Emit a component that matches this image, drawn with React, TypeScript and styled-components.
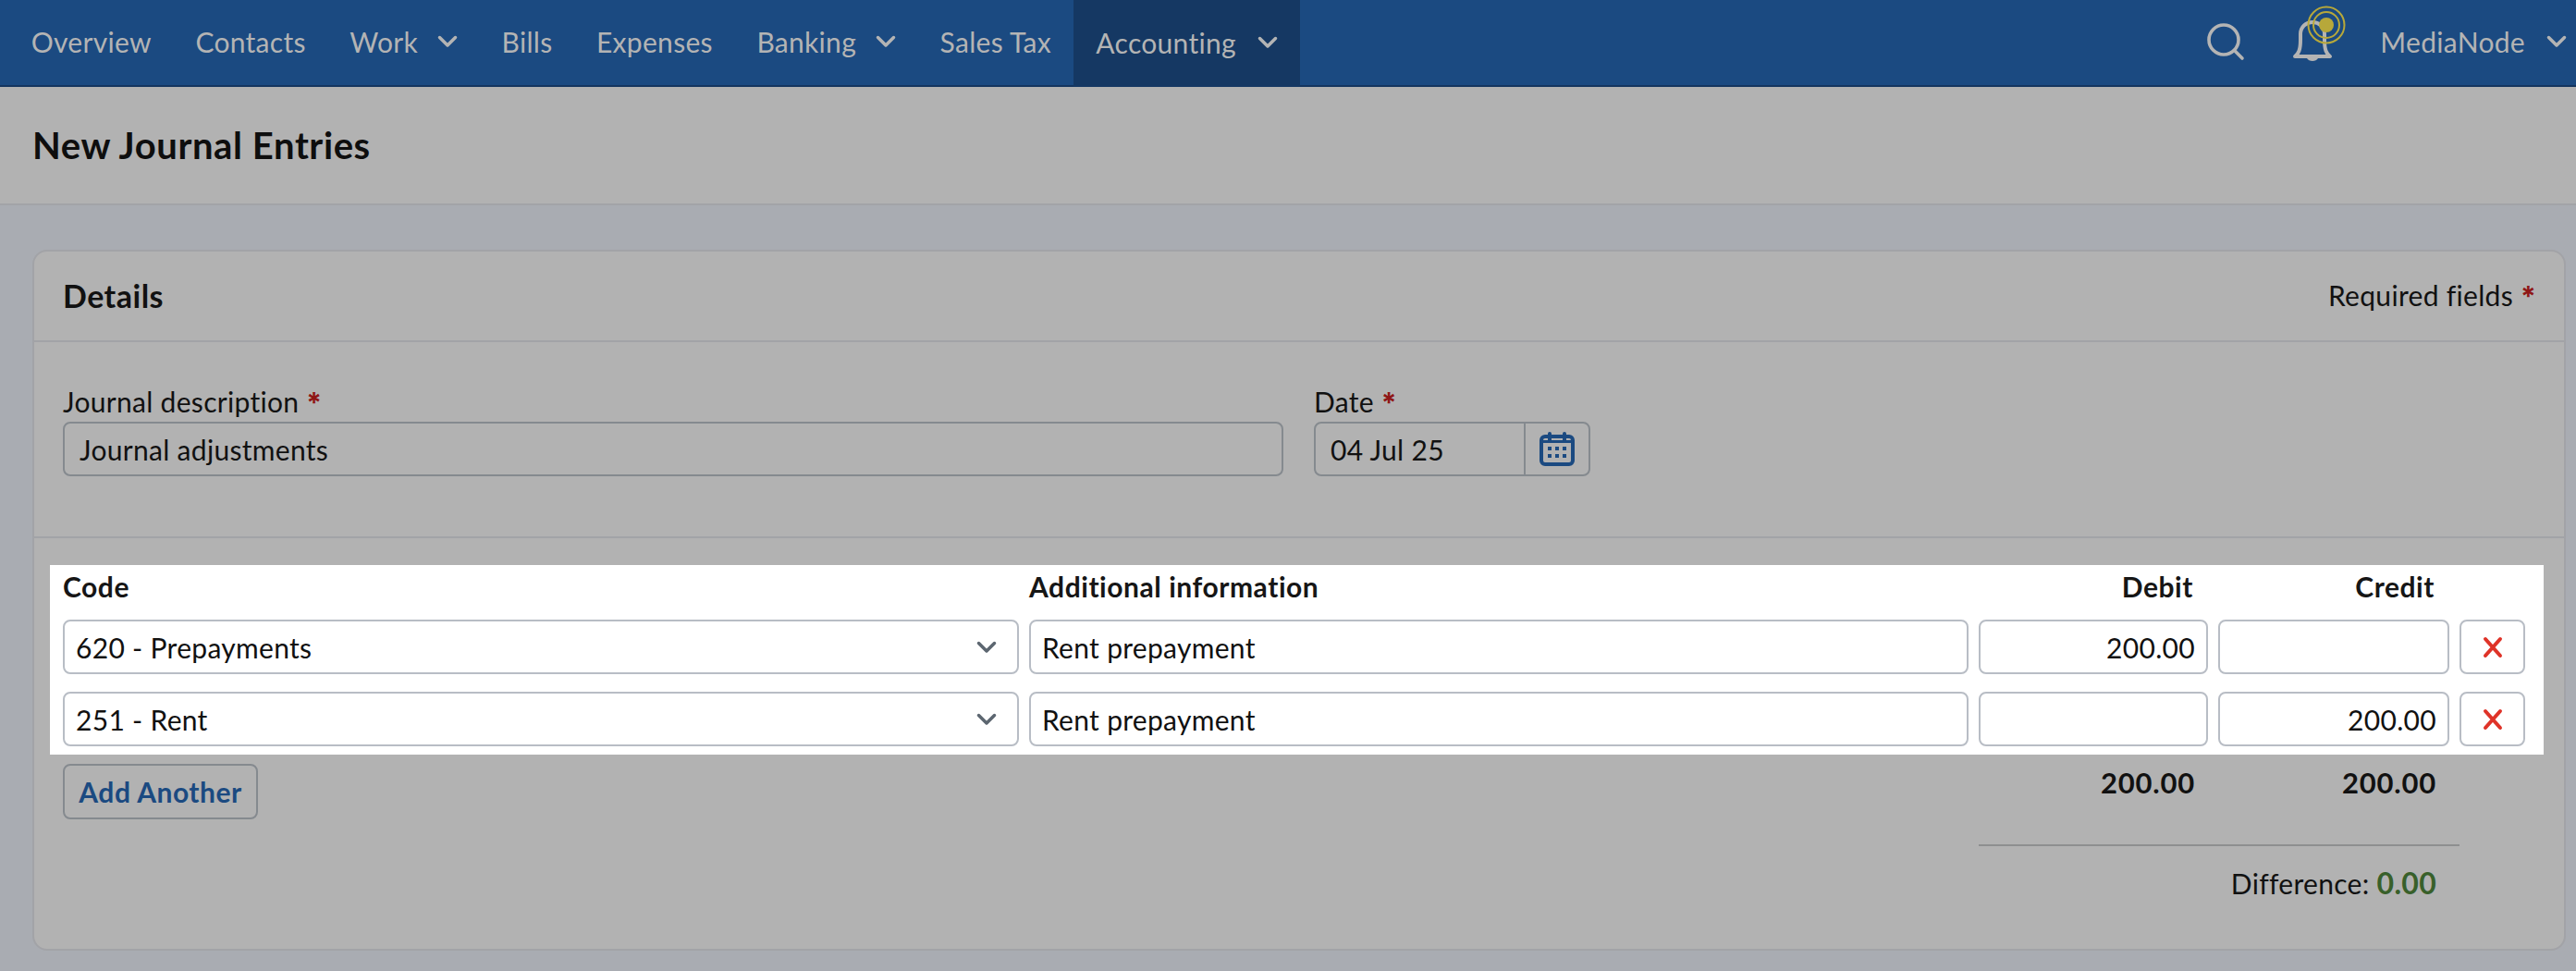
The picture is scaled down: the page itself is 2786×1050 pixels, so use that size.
import React from "react";
import styled, { createGlobalStyle } from "styled-components";
import { FiSearch } from "react-icons/fi";

const Global = createGlobalStyle`
  html, body { margin: 0; padding: 0; }
  body {
    background: #a9acb2;
    font-family: "Lato", "Liberation Sans", sans-serif;
    color: #111;
    font-size: 30px;
    letter-spacing: 0.3px;
    overflow: hidden;
  }
  * { box-sizing: border-box; }
`;

const Page = styled.div`
  width: 2786px;
  height: 1050px;
  overflow: hidden;
`;

const Nav = styled.nav`
  display: flex;
  align-items: stretch;
  height: 94px;
  background: #1b4a81;
  border-bottom: 2px solid #14355f;
  color: #b4b4b4;
  padding-left: 10px;
`;

const NavItem = styled.div<{ $active?: boolean }>`
  display: flex;
  align-items: center;
  gap: ${(p) => (p.$active ? "23px" : "21px")};
  padding: 0 ${(p) => (p.$active ? "24.5px" : "23.75px")} 2px;
  margin-bottom: ${(p) => (p.$active ? "-2px" : "0")};
  background: ${(p) => (p.$active ? "#153863" : "transparent")};
  white-space: nowrap;
`;

const NavRight = styled.div`
  margin-left: auto;
  display: flex;
  align-items: center;
  padding: 0 10px 2px 0;
`;

const Bell = styled.div`
  width: 60px;
  height: 66px;
  margin: 0 37px 12px 46px;
`;

const UserName = styled.span`
  margin-right: 23px;
`;

const PageHead = styled.header`
  height: 128px;
  background: #b2b2b2;
  border-bottom: 2px solid #a2a3a7;
  display: flex;
  align-items: center;
  padding-left: 35px;
`;

const Title = styled.h1`
  margin: 0;
  font-size: 40px;
  font-weight: 700;
  letter-spacing: 0.6px;
  color: #0e0e0e;
`;

const Main = styled.main`
  padding: 48px 11px 0 35px;
`;

const Card = styled.section`
  height: 758px;
  background: #b2b2b2;
  border: 2px solid #a2a3a7;
  border-radius: 16px;
`;

const CardHead = styled.div`
  height: 98px;
  border-bottom: 2px solid #a2a3a7;
  display: flex;
  align-items: center;
  justify-content: space-between;
  padding: 0 30px 2px 31px;
`;

const CardTitle = styled.h2`
  margin: 0;
  font-size: 34px;
  font-weight: 700;
  letter-spacing: 0.5px;
`;

const Star = styled.span`
  font-family: "Inter", sans-serif;
  color: #8f1616;
  font-weight: 700;
`;

const Fields = styled.div`
  height: 212px;
  border-bottom: 2px solid #a2a3a7;
  display: flex;
  gap: 33px;
  padding: 44px 0 0 31px;
`;

const Field = styled.div<{ $width: number }>`
  width: ${(p) => p.$width}px;
`;

const Label = styled.div`
  line-height: 41px;
  height: 42px;
`;

const Input = styled.div<{ $right?: boolean; $lit?: boolean }>`
  height: 59px;
  display: flex;
  align-items: center;
  justify-content: ${(p) => (p.$right ? "flex-end" : "space-between")};
  padding: 0 ${(p) => (p.$right ? "12px" : p.$lit ? "12px" : "16px")};
  background: ${(p) => (p.$lit ? "#fff" : "transparent")};
  border: 2px solid ${(p) => (p.$lit ? "#b8bdc5" : "#858a8f")};
  border-radius: 8px;
  white-space: nowrap;
`;

const Select = styled(Input)`
  padding-right: 22px;
`;

const DateBox = styled(Input)`
  padding: 0 0 0 16px;
`;

const CalendarBtn = styled.div`
  width: 70px;
  height: 100%;
  border-left: 2px solid #858a8f;
  display: flex;
  align-items: center;
  justify-content: center;
`;

const Lines = styled.div`
  margin: 29px 0 0 17px;
  width: 2697px;
  height: 205px;
  background: #fff;
  padding: 0 20px 0 14px;
`;

const LineGrid = styled.div`
  display: grid;
  grid-template-columns: 1034px 1016px 248px 250px 71px;
  column-gap: 11px;
`;

const HeadCell = styled.div<{ $right?: boolean }>`
  height: 59px;
  display: flex;
  align-items: center;
  justify-content: ${(p) => (p.$right ? "flex-end" : "flex-start")};
  padding: 0 ${(p) => (p.$right ? "16px" : "0")} 13px 0;
  font-weight: 700;
  letter-spacing: 0.55px;
  color: #161616;
`;

const RowGap = styled.div`
  grid-column: 1 / -1;
  height: 19px;
`;

const Remove = styled(Input)`
  justify-content: center;
  padding: 0;
`;

const Bottom = styled.div`
  display: flex;
  justify-content: space-between;
  padding: 10px 0 0 31px;
`;

const AddBtn = styled.button`
  width: 211px;
  height: 60px;
  background: transparent;
  border: 2px solid #858a8f;
  border-radius: 8px;
  color: #1b4a81;
  font: 700 30px "Lato", "Liberation Sans", sans-serif;
  letter-spacing: 0.5px;
  padding: 0;
`;

const Totals = styled.div`
  width: 520px;
  margin-right: 113px;
`;

const TotalRow = styled.div`
  height: 87px;
  display: grid;
  grid-template-columns: 248px 250px;
  column-gap: 11px;
  font-size: 31px;
  font-weight: 700;
  letter-spacing: 0.8px;
  line-height: 41px;
`;

const TotalCell = styled.div`
  text-align: right;
  padding-right: 14px;
`;

const Difference = styled.div`
  border-top: 2px solid #8e8f90;
  padding: 20px 25px 0 0;
  text-align: right;
`;

const Zero = styled.span`
  color: #38602a;
  font-size: 32px;
  font-weight: 700;
`;

function Chevron({ color = "#b4b4b4" }: { color?: string }) {
  return (
    <svg width="22" height="14" viewBox="0 0 22 14" fill="none">
      <path d="M2.5 2.5L11 11l8.5-8.5" stroke={color} strokeWidth="3.5" strokeLinecap="round" strokeLinejoin="round" />
    </svg>
  );
}

function Calendar() {
  return (
    <svg width="38" height="38" viewBox="0 0 38 38" fill="none">
      <rect x="2" y="5" width="34" height="30" rx="4" stroke="#1b4a81" strokeWidth="4" />
      <path d="M2 9h34v3H2z" fill="#1b4a81" />
      <path d="M11 2v7M27 2v7" stroke="#1b4a81" strokeWidth="4" strokeLinecap="round" />
      <path
        d="M9 16h4v4H9zM17 16h4v4h-4zM25 16h4v4h-4zM9 24h4v4H9zM17 24h4v4h-4zM25 24h4v4h-4z"
        fill="#1b4a81"
      />
    </svg>
  );
}

function Cross() {
  return (
    <svg width="24" height="24" viewBox="0 0 24 24">
      <path d="M4 3l16 18M20 3L4 21" stroke="#df3328" strokeWidth="4" strokeLinecap="round" />
    </svg>
  );
}

const lines = [
  { code: "620 - Prepayments", info: "Rent prepayment", debit: "200.00", credit: "" },
  { code: "251 - Rent", info: "Rent prepayment", debit: "", credit: "200.00" },
];

export default function App() {
  return (
    <Page>
      <Global />
      <Nav>
        <NavItem>Overview</NavItem>
        <NavItem>Contacts</NavItem>
        <NavItem>Work <Chevron /></NavItem>
        <NavItem>Bills</NavItem>
        <NavItem>Expenses</NavItem>
        <NavItem>Banking <Chevron /></NavItem>
        <NavItem>Sales Tax</NavItem>
        <NavItem $active>Accounting <Chevron /></NavItem>
        <NavRight>
          <FiSearch size={48} strokeWidth={1.8} />
          <Bell>
            <svg width="60" height="66" viewBox="0 0 60 66" fill="none">
              <path
                d="M5 55c4-3 6-7 6-18v-6c0-8 6-13 13-13s13 5 13 13v6c0 11 2 15 6 18z"
                stroke="#b4b4b4"
                strokeWidth="4"
                strokeLinejoin="round"
              />
              <path d="M18 57c2 4 10 4 12 0z" fill="#b4b4b4" />
              <circle cx="39" cy="21" r="8" fill="#b7a83a" />
              <circle cx="39" cy="21" r="14" stroke="#b7a83a" strokeWidth="2" />
              <circle cx="39" cy="21" r="19.5" stroke="#b7a83a" strokeWidth="2" />
            </svg>
          </Bell>
          <UserName>MediaNode</UserName>
          <Chevron />
        </NavRight>
      </Nav>
      <PageHead>
        <Title>New Journal Entries</Title>
      </PageHead>
      <Main>
        <Card>
          <CardHead>
            <CardTitle>Details</CardTitle>
            <span>Required fields <Star>*</Star></span>
          </CardHead>
          <Fields>
            <Field $width={1320}>
              <Label>Journal description <Star>*</Star></Label>
              <Input>Journal adjustments</Input>
            </Field>
            <Field $width={299}>
              <Label>Date <Star>*</Star></Label>
              <DateBox>
                04 Jul 25
                <CalendarBtn><Calendar /></CalendarBtn>
              </DateBox>
            </Field>
          </Fields>
          <Lines>
            <LineGrid>
              <HeadCell>Code</HeadCell>
              <HeadCell>Additional information</HeadCell>
              <HeadCell $right>Debit</HeadCell>
              <HeadCell $right>Credit</HeadCell>
              <div />
              {lines.map((l, i) => (
                <React.Fragment key={i}>
                  <Select $lit>
                    {l.code}
                    <Chevron color="#5c6670" />
                  </Select>
                  <Input $lit>{l.info}</Input>
                  <Input $lit $right>{l.debit}</Input>
                  <Input $lit $right>{l.credit}</Input>
                  <Remove $lit><Cross /></Remove>
                  {i === 0 && <RowGap />}
                </React.Fragment>
              ))}
            </LineGrid>
          </Lines>
          <Bottom>
            <AddBtn>Add Another</AddBtn>
            <Totals>
              <TotalRow>
                <TotalCell>200.00</TotalCell>
                <TotalCell>200.00</TotalCell>
              </TotalRow>
              <Difference>Difference: <Zero>0.00</Zero></Difference>
            </Totals>
          </Bottom>
        </Card>
      </Main>
    </Page>
  );
}
